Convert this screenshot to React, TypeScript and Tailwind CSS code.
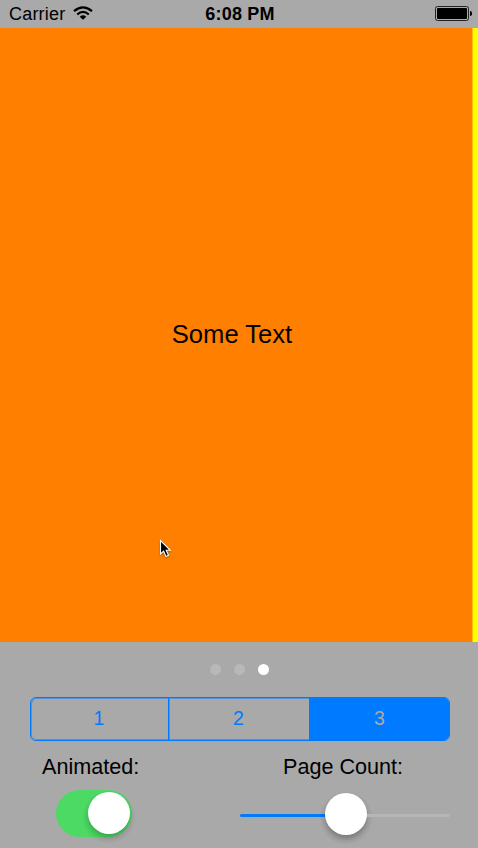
function StatusBar() {
  return (
    <header className="grid h-7 shrink-0 grid-cols-3 items-center pl-[9px] pr-[6px] text-[18px] leading-[28px]">
      <div className="flex items-center gap-[8px]">
        <span className="tracking-[0.2px]">Carrier</span>
        <svg className="mb-[2px]" width="20" height="14" viewBox="0 0 20 14" fill="none" stroke="black" strokeWidth="2.2">
          <path d="M1 5.2Q10 -2.6 19 5.2" />
          <path d="M4.2 8.5Q10 3.3 15.8 8.5" />
          <path d="M6.7 10.7Q10 8 13.3 10.7L10 13.8Z" fill="black" stroke="none" />
        </svg>
      </div>
      <span className="-ml-[1px] text-center font-bold tracking-[0.2px]">6:08 PM</span>
      <div className="flex items-center justify-end pb-[2px]">
        <div className="h-[15px] w-[34px] rounded-[2.5px] border border-[#222] p-px">
          <div className="h-full rounded-[1px] bg-black" />
        </div>
        <div className="ml-px h-[5px] w-[2px] rounded-r-full bg-black" />
      </div>
    </header>
  );
}

function Cursor() {
  return (
    <svg className="absolute left-[159px] top-[511px] drop-shadow-[0_1px_1px_rgba(0,0,0,0.35)]" width="14" height="20" viewBox="0 0 14 20">
      <path d="M1.5 1.5V15L4.6 12.2L7 17.5L9.5 16.3L7.2 11.3H11.3Z" fill="black" stroke="white" strokeWidth="1.1" />
    </svg>
  );
}

export default function App() {
  return (
    <div className="flex h-[848px] w-[478px] flex-col overflow-hidden bg-[#a9a9a9] font-['Liberation_Sans',Arial,sans-serif] text-black">
      <StatusBar />
      <main className="relative flex h-[613.5px] shrink-0 bg-[#ff8000]">
        <div className="flex flex-1 items-center justify-center pb-[2px] pr-[8px]">
          <span className="text-[25.6px] leading-8">Some Text</span>
        </div>
        <div className="w-px bg-[#ffc400]" />
        <div className="w-[5px] bg-[#ffff00]" />
        <Cursor />
      </main>
      <div className="flex h-[55.5px] shrink-0 items-center justify-center gap-[13px] pl-[1px]">
        <i className="size-[11px] rounded-full bg-[#b8b8b8]" />
        <i className="size-[11px] rounded-full bg-[#b8b8b8]" />
        <i className="size-[11px] rounded-full bg-white" />
      </div>
      <div className="ml-[30px] flex h-[44px] w-[420px] shrink-0 overflow-hidden rounded-[6px] border border-[#007aff] text-center text-[19.5px] leading-[39px] text-[#007aff]">
        <button className="w-[137px] rounded-l-[5px] pb-[2px] pr-[1px] shadow-[inset_1px_1px_0_#5591d4,inset_0_-1px_0_#5591d4]">1</button>
        <div className="w-px bg-[#007aff]" />
        <button className="w-[140px] pb-[2px] pr-[1px] shadow-[inset_1px_1px_0_#5591d4,inset_0_-1px_0_#5591d4]">2</button>
        <button className="flex-1 bg-[#007aff] pb-[2px] pl-[1px] text-[#a9a9a9]">3</button>
      </div>
      <div className="flex flex-1 pl-[30px] pt-[10px]">
        <section className="w-[210px]">
          <div className="ml-[12px] text-[21.6px] leading-8">Animated:</div>
          <div className="ml-[25.5px] mt-[7px] flex h-[46.5px] w-[76.5px] items-center justify-end rounded-full bg-[#4cd964] pr-[2px]">
            <div className="size-[42px] rounded-full bg-white shadow-[0_4px_5px_rgba(0,0,0,0.2),0_4px_0_5px_rgba(0,0,0,0.025)]" />
          </div>
        </section>
        <section className="w-[210px]">
          <div className="ml-[43px] text-[21.6px] leading-8">Page Count:</div>
          <div className="mt-[10px] flex h-[42px] items-center">
            <div className="mt-[3px] h-[3px] w-[85px] rounded-l-full bg-[#007aff]" />
            <div className="size-[42px] rounded-full bg-white shadow-[0_4px_5px_rgba(0,0,0,0.25),0_4px_0_5px_rgba(0,0,0,0.025)]" />
            <div className="mt-[3px] h-[3px] flex-1 rounded-r-full bg-[#b6b6b6]" />
          </div>
        </section>
      </div>
    </div>
  );
}
